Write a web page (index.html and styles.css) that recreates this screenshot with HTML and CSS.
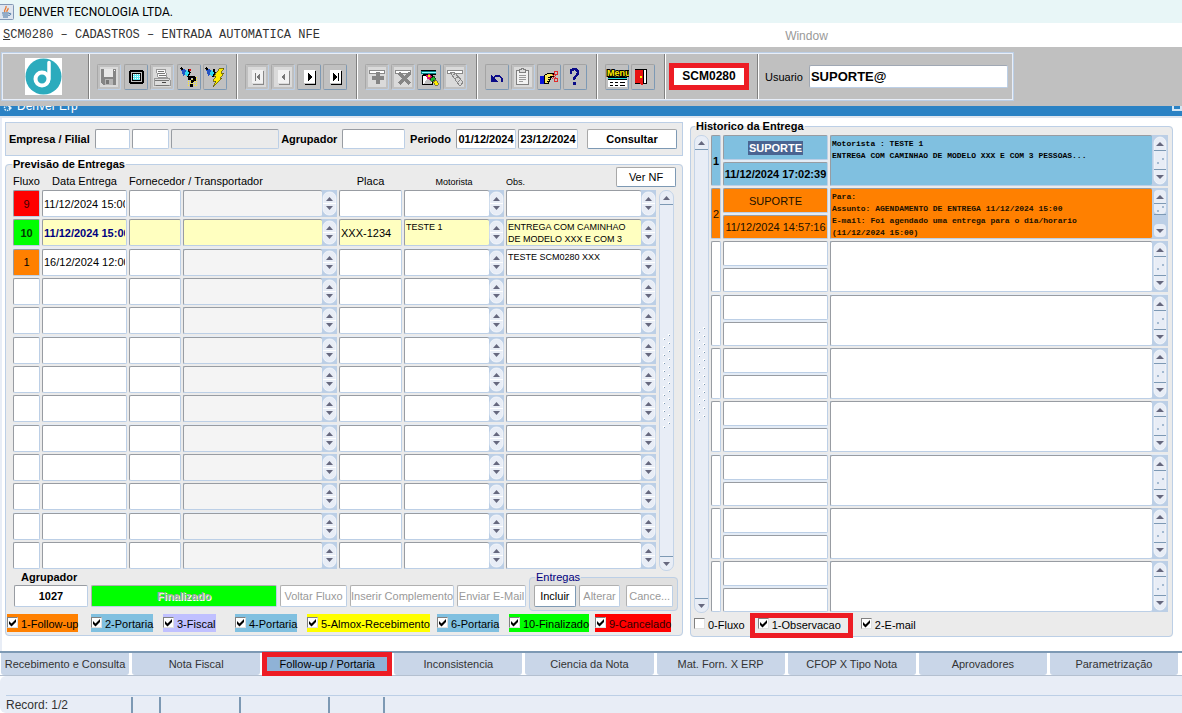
FILE: index.html
```html
<!DOCTYPE html>
<html lang="pt-BR">
<head>
<meta charset="utf-8">
<title>DENVER TECNOLOGIA LTDA.</title>
<link rel="stylesheet" href="styles.css">
</head>
<body>
<header class="titlebar">
  <svg class="java" viewBox="0 0 14 16" aria-hidden="true"><rect x="-3" y="0.5" width="16.500" height="15" rx="1" fill="#dfe6f0" stroke="#8297b5"/><path d="M5 8C3 6 7 5 6 2M7 8C6 6 9 6 8 4" fill="none" stroke="#e8762c" stroke-width="1.300"/><path d="M2 9h7M2.500 11h6M3 13h5M9 9.500c3-1 2 2-.5 2" fill="none" stroke="#44719f"/></svg>
  <span>DENVER TECNOLOGIA LTDA.</span>
</header>
<nav class="menubar">
  <span class="path"><u>S</u>CM0280 – CADASTROS – ENTRADA AUTOMATICA NFE</span>
  <span class="window">Window</span>
</nav>
<div class="toolbar-area">
  <div class="toolbar">
    <div class="sec logo">
      <svg viewBox="0 0 37 37" role="img" aria-label="Denver"><rect width="37" height="37" fill="#fff"/><circle cx="18.500" cy="18.500" r="18" fill="#2cabbd"/><circle cx="17" cy="21" r="6.500" fill="none" stroke="#fff" stroke-width="4"/><path d="M24 4.500V18q0 6-3 8" fill="none" stroke="#fff" stroke-width="3.500" stroke-linecap="round"/></svg>
    </div>
    <div class="sec five">
      <button class="tb off" aria-label="Salvar"><svg viewBox="0 0 24 24"><path d="M4 4h15v16H6l-2-2z" fill="#858585"/><path d="M7 4h9v8H7z" fill="#e8e8e8"/><path d="M17 5h1v1h-1z" fill="#fff"/><path d="M8 14h8v6H8z" fill="#b5b5b5"/><path d="M9 15h3v4H9z" fill="#777"/></svg></button>
      <button class="tb" aria-label="Tela"><svg viewBox="0 0 24 24"><path d="M6 5h13v1h1v12h-1v1H6v-1H5V6h1z" fill="#000"/><path d="M7 7h11v10H7z" fill="#c0c0c0"/><path d="M8 8h9v8H8z" fill="#000"/><path d="M9 9h7v6H9z" fill="#5fe6ee"/><path d="M9 9.500h7M9 11.500h7M9 13.500h7" stroke="#fff" stroke-dasharray="1 1"/></svg></button>
      <button class="tb off" aria-label="Imprimir"><svg viewBox="0 0 24 24"><path d="M6 4h9l2 8H8z" fill="#fafafa" stroke="#999"/><path d="M8 6.500h6M8 8.500h7M9 10.500h7" stroke="#777"/><path d="M4 13h15l1 2v5H4z" fill="#ddd" stroke="#999"/><path d="M5 15.500h14M6 20.500h13" stroke="#777"/><path d="M12 17.500h4" stroke="#444"/></svg></button>
      <button class="tb" aria-label="Entrar consulta"><svg viewBox="0 0 24 24"><path d="M11 12.500h10M11 14.500h10M11 16.500h10M11 18.500h10M11 20.500h10" stroke="#ffec20" stroke-dasharray="1 1"/><path d="M4 4h3l3 3-4 4-1-4z" fill="#2453c4"/><path d="M9 5l4 2-2 5-3-2z" fill="#30d8ee"/><path d="M4 3l2 2M12 4v3M13 7l-2 5" stroke="#000" stroke-width="1.500"/><path d="M12 4h2v2h-2z" fill="#d00"/><path d="M12 11h6v1h1v4h-2v1h-1v1h-2v-3h2v-2h-2v2h-3v-3h1z" fill="#000"/><path d="M13 19h3v3h-3z" fill="#000"/></svg></button>
      <button class="tb" aria-label="Executar consulta"><svg viewBox="0 0 24 24"><path d="M3 4h3l3 3-4 4-1-4z" fill="#2453c4"/><path d="M8 5l4 2-2 5-3-2z" fill="#30d8ee"/><path d="M3 3l2 2M11 4v3M12 7l-2 5" stroke="#000" stroke-width="1.500"/><path d="M17 3h4l-3 5h3l-4 5h2l-9 9 3-6h-3l3-5h-2z" fill="#ffee00" stroke="#554d00" stroke-width=".7"/></svg></button>
    </div>
    <div class="sec four">
      <button class="tb off" aria-label="Primeiro"><svg viewBox="0 0 24 24"><path d="M7 5h11v13H7z" fill="#f2f2f2"/><path d="M18.500 6v13.500H8" fill="none" stroke="#888"/><path d="M10 8h1v8h-1zM15 8v8l-4-4z" fill="#777"/></svg></button>
      <button class="tb off" aria-label="Anterior"><svg viewBox="0 0 24 24"><path d="M7 5h11v13H7z" fill="#f2f2f2"/><path d="M18.500 6v13.500H8" fill="none" stroke="#888"/><path d="M14 8v8l-4-4z" fill="#777"/></svg></button>
      <button class="tb" aria-label="Próximo"><svg viewBox="0 0 24 24"><path d="M7 5h11v13H7z" fill="#fff"/><path d="M18.500 6v13.500H8" fill="none" stroke="#000"/><path d="M11 8v8l4-4z" fill="#000"/></svg></button>
      <button class="tb" aria-label="Último"><svg viewBox="0 0 24 24"><path d="M7 5h11v13H7z" fill="#fff"/><path d="M18.500 6v13.500H8" fill="none" stroke="#000"/><path d="M10 8v8l4-4zM15 8h1v8h-1z" fill="#000"/></svg></button>
    </div>
    <div class="sec four">
      <button class="tb off" aria-label="Inserir registro"><svg viewBox="0 0 24 24"><path d="M4.500 5.500h15v3h-15z" fill="#fff" stroke="#888"/><path d="M11 7h4v4h4v4h-4v4h-4v-4H7v-4h4z" fill="#858585"/></svg></button>
      <button class="tb off" aria-label="Remover registro"><svg viewBox="0 0 24 24"><path d="M4.500 5.500h15v3h-15z" fill="#fff" stroke="#888"/><path d="M8 8l11 11M19 8L8 19" stroke="#858585" stroke-width="3"/></svg></button>
      <button class="tb" aria-label="Limpar registro"><svg viewBox="0 0 24 24"><path d="M4 5h15v4H4z" fill="#087f82"/><path d="M4 5.500h15M6 9.500h13" stroke="#000"/><path d="M5 7.500h14" stroke="#8ff"/><path d="M5.500 10.500h10v9h-10z" fill="#fff" stroke="#000"/><path d="M7 19l4-7 4 7z" fill="#c0c0c0"/><path d="M9 10l4-1 3 4-3 2-3-1z" fill="#e41568"/><path d="M11 10h2v2h-2z" fill="#ffec00"/><path d="M13 14l4-3 2 3-4 3z" fill="#1cb62c" stroke="#000" stroke-width=".6"/><path d="M16 17l3-2 3 4-3 2z" fill="#ffec00" stroke="#222" stroke-width=".5"/></svg></button>
      <button class="tb off" aria-label="Limpar campo"><svg viewBox="0 0 24 24"><path d="M4.500 5.500h15v3h-15z" fill="#fff" stroke="#888"/><path d="M7 7h4l9 10-2 3h-2z" fill="#d8d8d8" stroke="#888"/><path d="M9 11l4-3M12 14l4-3M15 17l3-3" stroke="#888"/></svg></button>
    </div>
    <div class="sec four">
      <button class="tb" aria-label="Desfazer"><svg viewBox="0 0 24 24"><path d="M8 14c2-5 11-4 9 3" fill="none" stroke="#0b0b88" stroke-width="1.500"/><path d="M6 10v7h7z" fill="#0b0b88"/></svg></button>
      <button class="tb off" aria-label="Colar"><svg viewBox="0 0 24 24"><rect x="5.500" y="5.500" width="12" height="14" fill="#f2f2f2" stroke="#808080" stroke-width="1.500"/><path d="M8.500 7.500v-3h2v-1h2v1h2v3z" fill="#ddd" stroke="#808080"/><path d="M8 10.500h7M8 12.500h7M8 14.500h7M8 16.500h4" stroke="#999"/></svg></button>
      <button class="tb" aria-label="Lista de valores"><svg viewBox="0 0 24 24"><path d="M3 11h4v8H3z" fill="#0a16d8"/><path d="M7.500 10.500l3-2h6v3h-3v3h-1v2h-1v2h-4z" fill="#f7e85c" stroke="#000"/><path d="M11 12.500h4M11 14.500h3M10 16.500h3" stroke="#000"/><circle cx="19" cy="8" r="2" fill="none" stroke="#e02a2a"/><circle cx="19" cy="15" r="2" fill="none" stroke="#e02a2a"/><path d="M15 9l4 4M15 14l4-4" stroke="#e02a2a"/></svg></button>
      <button class="tb" aria-label="Ajuda"><svg viewBox="0 0 24 24"><path d="M8 9V7q0-3 3.500-3T15 7.500q0 2-2 3.500t-2 4" fill="none" stroke="#0b0b88" stroke-width="2.500"/><circle cx="11.500" cy="18.500" r="1.800" fill="#0b0b88"/></svg></button>
    </div>
    <div class="sec two">
      <button class="tb menu" aria-label="Menu"><svg viewBox="0 0 24 24"><text x="2" y="11" class="menutext">Menu</text><path d="M3 13.500h19" stroke="#20dede"/><path d="M3 12.500h19M3 14.500h19" stroke="#000"/><path d="M3 15h19v7H3z" fill="#fff"/><path d="M5 17.500h3M10 17.500h3M15 17.500h5M5 20.500h3M10 20.500h3M15 20.500h5" stroke="#000"/></svg></button>
      <button class="tb" aria-label="Sair"><svg viewBox="0 0 24 24"><path d="M4.500 4.500h11v14h-11z" fill="#fff" stroke="#000"/><path d="M4 4h7l1 2v14h-2l-2-2H4z" fill="#e81313"/><path d="M12.500 4v15M4 4.500h11" stroke="#000"/><path d="M9 11h2v2H9z" fill="#fff200"/></svg></button>
    </div>
    <div class="sec code"><strong class="marked">SCM0280</strong></div>
    <div class="sec user"><label for="usuario">Usuario</label><input id="usuario" class="field" value="SUPORTE@"></div>
  </div>
</div>
<div class="mdi"><svg class="cog" viewBox="0 0 10 10" aria-hidden="true"><circle cx="4" cy="5" r="2.500" fill="none" stroke="#dff0fa" stroke-width="1.500" stroke-dasharray="1.500 1"/><path d="M6 2l3 3-3 3z" fill="#dff0fa"/></svg><span>Denver Erp</span><i class="restore"></i></div>

<main class="work">
  <section class="left">
    <form class="filter">
      <label for="emp">Empresa / Filial</label>
      <input id="emp" class="field f-emp"><input class="field f-fil" aria-label="Filial"><input class="field f-nome" aria-label="Nome da filial" readonly>
      <label for="agr">Agrupador</label><input id="agr" class="field f-agr">
      <label for="de" class="periodo">Periodo</label><input id="de" class="field f-date" value="01/12/2024"><input class="field f-date" aria-label="Periodo final" value="23/12/2024">
      <button type="button" class="btn consultar">Consultar</button>
    </form>
    <fieldset class="panel previsao">
      <legend>Previsão de Entregas</legend>
      <button class="btn vernf">Ver NF</button>
      <div class="gridwrap">
        <table class="grid">
          <colgroup><col class="c-flx"><col class="c-dat"><col class="c-for"><col class="c-tra"><col class="c-pla"><col class="c-mot"><col class="c-obs"></colgroup>
          <thead><tr><th>Fluxo</th><th>Data Entrega</th><th colspan="2" class="start">Fornecedor / Transportador</th><th>Placa</th><th class="mini">Motorista</th><th class="mini start">Obs.</th></tr></thead>
          <tbody id="entregas"></tbody>
        </table>
        <div class="scroll"><i class="up"></i><i class="grip"></i><i class="down"></i></div>
      </div>
      <div class="actions">
        <div class="agrup"><label for="agrup">Agrupador</label><input id="agrup" class="field" value="1027"></div>
        <button class="btn done" disabled>Finalizado</button>
        <button class="btn b-volta" disabled>Voltar Fluxo</button>
        <button class="btn b-insere" disabled>Inserir Complemento</button>
        <button class="btn b-envia" disabled>Enviar E-Mail</button>
        <fieldset class="entregas">
          <legend>Entregas</legend>
          <div><button class="btn">Incluir</button><button class="btn" disabled>Alterar</button><button class="btn" disabled>Cance...</button></div>
        </fieldset>
      </div>
      <div class="chips">
        <label class="orange"><input type="checkbox" checked>1-Follow-up</label>
        <label class="blue"><input type="checkbox" checked>2-Portaria</label>
        <label class="lilac"><input type="checkbox" checked>3-Fiscal</label>
        <label class="blue"><input type="checkbox" checked>4-Portaria</label>
        <label class="yellow"><input type="checkbox" checked>5-Almox-Recebimento</label>
        <label class="blue"><input type="checkbox" checked>6-Portaria</label>
        <label class="green"><input type="checkbox" checked>10-Finalizado</label>
        <label class="red"><input type="checkbox" checked>9-Cancelado</label>
      </div>
    </fieldset>
  </section>
  <fieldset class="panel historico">
    <legend>Historico da Entrega</legend>
    <div class="histwrap">
      <div class="scroll"><i class="up"></i><i class="grip"></i><i class="down"></i></div>
      <table class="hist">
        <colgroup><col class="h-num"><col class="h-usr"><col></colgroup>
        <tbody id="historico"></tbody>
      </table>
    </div>
    <div class="kinds">
      <label><input type="checkbox">0-Fluxo</label>
      <label class="marked-label"><input type="checkbox" checked>1-Observacao</label>
      <label><input type="checkbox" checked>2-E-mail</label>
    </div>
  </fieldset>
</main>

<nav class="tabs">
  <button>Recebimento e Consulta</button><button>Nota Fiscal</button><button class="active">Follow-up / Portaria</button><button>Inconsistencia</button><button>Ciencia da Nota</button><button>Mat. Forn. X ERP</button><button>CFOP X Tipo Nota</button><button>Aprovadores</button><button>Parametrização</button>
</nav>
<footer class="status">
  <div class="cells"><span class="s1">Record: 1/2</span><span class="s2"></span><span class="s3"></span><span class="s4"></span><span class="s5"></span></div>
</footer>
<script src="app.js"></script>
</body>
</html>
```

FILE: styles.css
```css
* { box-sizing: border-box; }
body {
  margin: 0;
  min-height: 100vh;
  display: flex;
  flex-direction: column;
  background: #fff;
  color: #000;
  font: 11px/12px "Liberation Sans", Arial, sans-serif;
}
button, input, textarea { font: inherit; color: inherit; margin: 0; }
fieldset { margin: 0; padding: 0; min-width: 0; }

.titlebar {
  height: 23px;
  display: flex;
  align-items: center;
  gap: 5px;
  background: #e8f6f7;
  font: 12px/16px Roboto, "Noto Sans", sans-serif;
}
.java { width: 14px; height: 16px; }
.menubar { height: 24px; display: flex; align-items: center; padding-left: 3px; }
.path { flex: 0 0 66%; font: 12px/16px "Liberation Mono", monospace; color: #333; white-space: nowrap; }
.window { font-size: 12px; color: #999; padding: 2px 0 0 4px; }

.toolbar-area { background: #c0c0c0; padding: 5px 0 5px 1px; }
.toolbar {
  display: flex;
  width: 1013px;
  max-width: 100%;
  height: 49px;
  border: 1px solid #bccfe6;
  outline: 1px solid #e8eef8;
  outline-offset: -2px;
}
.sec { display: flex; align-items: center; justify-content: space-between; padding: 0 9px 0 7px; border-left: 1px solid #fff; border-right: 1px solid #808080; }
.sec:first-child { border-left: 0; }
.sec:last-child { border-right: 0; }
.logo { width: 87px; padding: 0 0 0 23px; }
.logo svg { width: 37px; height: 37px; }
.five { width: 148px; }
.four { width: 120px; }
.two { width: 68px; }
.code { width: 93px; padding: 0 8px 0 3px; }
.user { flex: 1; gap: 6px; padding: 0 5px 0 6px; }
.marked { flex: 1; border: 5px solid #ed1c24; background: #fff; text-align: center; font-size: 12px; line-height: 17px; }
.user .field { flex: 1; min-width: 0; height: 23px; font-size: 13px; font-weight: bold; border-color: #a0a8b4 #bccfe6 #bccfe6 #a0a8b4; }
.tb {
  width: 24px;
  height: 26px;
  padding: 0;
  border: 1px solid;
  border-color: #a4a4a4 #7d99b4 #7d99b4 #a4a4a4;
  border-radius: 2px;
  background: #c0c0c0;
}
.tb.off { border-color: #a8a8a8 #bccfe6 #bccfe6 #a8a8a8; background: #dadada; outline: 2px solid #c0c0c0; outline-offset: -3px; }
.tb svg { display: block; width: 24px; height: 24px; margin-left: -1px; shape-rendering: crispEdges; }
.menutext { font: bold 9px "Liberation Sans", sans-serif; fill: #ffee00; stroke: #000; stroke-width: 2px; paint-order: stroke; }

.mdi { height: 12px; display: flex; align-items: center; overflow: hidden; background: #2a82c4; color: #fff; font-size: 12px; line-height: 12px; border-bottom: 2px solid #dfe6ef; padding-left: 3px; gap: 4px; }
.mdi span { align-self: flex-start; margin-top: -6px; flex: 1; }
.cog { width: 10px; height: 10px; align-self: flex-start; margin-top: -3px; }
.restore { width: 10px; height: 8px; border: 2px solid #d3e6f4; align-self: flex-start; margin-top: -3px; }

.work { display: grid; grid-template-columns: 678fr 483fr; gap: 7px; padding: 2px 9px 14px 3px; border-left: 2px solid #e8edf6; }
.left { display: flex; flex-direction: column; gap: 2px; padding-top: 2px; }
.filter { display: flex; align-items: center; gap: 2px; height: 34px; padding: 0 5px 0 3px; border: 1px solid #bccfe6; background: #ebebeb; }
.filter label { font-weight: bold; padding: 0 3px 0 0; white-space: nowrap; }
.filter .periodo { padding-left: 3px; }
.field {
  display: block;
  min-width: 0;
  height: 20px;
  padding: 0 1px;
  background: #fff;
  border: 1px solid;
  border-color: #989ca2 #bccfe6 #bccfe6 #989ca2;
  border-radius: 2px;
  outline: 0;
}
.field[readonly] { background: #ebebeb; }
.f-emp { flex: 33; width: 0; }
.f-fil { flex: 35; width: 0; }
.f-nome { flex: 110; width: 0; }
.f-agr { flex: 62; width: 0; }
.f-date { width: 60px; font-weight: bold; text-align: center; padding: 0; }
.btn {
  height: 22px;
  padding: 0;
  background: #fff;
  border: 1px solid;
  border-color: #a8a8a8 #7d99b4 #7d99b4 #a8a8a8;
  border-radius: 2px;
  white-space: nowrap;
}
.btn:disabled { color: #999; border-color: #b0b0b0 #bccfe6 #bccfe6 #b0b0b0; }
.consultar { width: 90px; height: 20px; font-weight: bold; margin-left: 7px; }

.panel { position: relative; border: 1px solid #bccfe6; border-radius: 4px; background: #ebebeb; }
.panel > legend { margin-left: 6px; padding: 0 1px; font-weight: bold; line-height: 12px; }
.vernf { position: absolute; top: -3px; right: 6px; width: 60px; height: 20px; }
.previsao .vernf { margin-top: 0; }
.gridwrap { display: flex; gap: 1px; padding: 0 8px 0 5px; }
.grid, .hist { table-layout: fixed; border-collapse: separate; border-spacing: 2px; }
.grid { flex: 1; width: 0; }
th, td { padding: 0; }
th { height: 16px; font-weight: normal; white-space: nowrap; vertical-align: bottom; line-height: 14px; }
th.mini { font-size: 9px; line-height: 12px; }
th.start { text-align: left; }
.c-flx { width: 27px; }
.c-dat { width: 85px; }
.c-for { width: 52px; }
.c-tra { width: 154px; }
.c-pla { width: 63px; }
.c-mot { width: 100px; }
.c-obs { width: 150px; }
.grid td { height: 27px; background: #e4ecf6; }
.grid tr:nth-child(3n) td { height: 28px; }
.grid td .field { width: 100%; height: 27px; }
.grid td:first-child .field { text-align: center; padding: 0; }
.memo { display: flex; background: #bccfe6; }
.memo textarea.field { flex: 1; width: 0; resize: none; overflow: hidden; font-size: 9px; line-height: 12px; border-right: 0; padding: 1px; }
.memo input.field { flex: 1; width: 0; background: #f4f4f4; border-right: 0; }
.spin { flex: 0 0 15px; height: 27px; background: url("data:image/svg+xml,%3Csvg xmlns='http://www.w3.org/2000/svg' width='15' height='27'%3E%3Crect x='1' y='2' width='13' height='23' rx='6' fill='%23e8edf6' stroke='%23fff' stroke-width='.6'/%3E%3Cpath d='M1 13.500h13' stroke='%23fff'/%3E%3Cpath d='M4 11h7L7.500 7zM4 16h7l-3.500 4z' fill='%2366687e'/%3E%3C/svg%3E") no-repeat; }
.current .field, .current .memo .field { background: #ffffc0; }
.current .b { color: #000080; font-weight: bold; }
.field.f-red { background: #f00; color: #400000; }
.current .field.f-green { background: #0f0; font-weight: bold; color: #003c00; }
.field.f-orange { background: #ff8000; }

.scroll { flex: 0 0 15px; display: flex; flex-direction: column; align-items: center; justify-content: space-between; background: #e8edf6; border: 1px solid #c4d4e8; border-radius: 7px; }
.gridwrap .scroll { margin-top: 20px; }
.scroll i { width: 13px; height: 14px; background: no-repeat center; }
.scroll .up { border-bottom: 1px solid #7d99b4; background-image: url("data:image/svg+xml,%3Csvg xmlns='http://www.w3.org/2000/svg' width='13' height='13'%3E%3Cpath d='M3 9h7L6.500 5z' fill='%2366687e'/%3E%3C/svg%3E"); }
.scroll .down { border-top: 1px solid #7d99b4; background-image: url("data:image/svg+xml,%3Csvg xmlns='http://www.w3.org/2000/svg' width='13' height='13'%3E%3Cpath d='M3 5h7L6.500 9z' fill='%2366687e'/%3E%3C/svg%3E"); }
.scroll .grip { height: 96px; background: url("data:image/svg+xml,%3Csvg xmlns='http://www.w3.org/2000/svg' width='13' height='8'%3E%3Cpath d='M3 5h2v2H3zM8 1h2v2H8z' fill='%23fff'/%3E%3Cpath d='M4 6h1v1H4zM9 2h1v1H9z' fill='%237d99b4'/%3E%3C/svg%3E"); }

.actions { display: flex; align-items: flex-end; gap: 3px; padding: 0 4px 0 8px; }
.actions > .btn, .agrup { margin-bottom: 4px; }
.agrup { width: 74px; }
.agrup label { display: block; padding-left: 7px; font-weight: bold; margin-bottom: 2px; }
.agrup .field { width: 100%; height: 22px; font-weight: bold; text-align: center; }
.actions .done { flex: 1; background: #0f0; font-weight: bold; color: #a5a5a5; text-shadow: 1px 1px 0 #fff; }
.b-volta { width: 67px; }
.b-insere { width: 104px; }
.b-envia { width: 69px; }
.entregas { width: 149px; border: 1px solid #bccfe6; border-radius: 4px; background: #e0e0e0; padding: 2px 4px 3px; }
.entregas legend { margin-left: 1px; padding: 0 1px; color: #000080; }
.entregas div { display: flex; justify-content: space-between; gap: 3px; }
.entregas .btn { width: 42px; }
.entregas .btn:last-child { width: 47px; margin-left: 3px; }

.chips { display: grid; grid-template-columns: 84fr 72fr 72fr 72fr 130fr 72fr 86fr 87fr; padding: 3px 0 3px 1px; }
.chips label, .kinds label { display: flex; align-items: center; gap: 3px; white-space: nowrap; }
.chips label { justify-self: start; height: 18px; padding-top: 2px; }
input[type="checkbox"] { appearance: none; flex: none; width: 11px; height: 11px; margin-bottom: 3px; background: #fff no-repeat center; border: 1px solid; border-color: #808080 #e0e0e0 #e0e0e0 #808080; }
input[type="checkbox"]:checked { background-image: url("data:image/svg+xml,%3Csvg xmlns='http://www.w3.org/2000/svg' width='9' height='9'%3E%3Cpath d='M1 3v3l2.500 2.500L8 4V1L3.500 5.500z' fill='%23000'/%3E%3C/svg%3E"); }
.orange { background: #ff8000; }
.blue { background: #80c0e0; }
.lilac { background: #c0c0ff; }
.yellow { background: #ff0; }
.green { background: #0f0; }
.red { background: #f00; color: #300000; }

.historico > legend { margin-left: 4px; }
.histwrap { display: flex; padding: 1px 2px 0 3px; }
.histwrap .scroll { margin: 2px 0 1px; }
.hist { flex: 1; width: 0; }
.h-num { width: 10px; }
.h-usr { width: 105px; }
.hist td { height: 51px; background: #e4ecf6; }
.hist tr:nth-child(3n+1) td { height: 52px; }
.hist tr:first-child td { height: 51px; }
.hist .field { width: 100%; text-align: center; padding: 0; }
.hist .num { height: 51px; }
.hist .who { display: flex; flex-direction: column; gap: 2px; }
.hist .who .field { height: 25px; }
.hist .who .field:last-child { height: 24px; }
.hist .memo textarea.field { height: 51px; text-align: left; font: bold 8px/12px "Liberation Mono", monospace; padding: 2px 1px; }
.bar { flex: 0 0 16px; height: 51px; background: url("data:image/svg+xml,%3Csvg xmlns='http://www.w3.org/2000/svg' width='16' height='51'%3E%3Crect x='2' y='2' width='12' height='47' rx='6' fill='%23e8edf6' stroke='%23fff' stroke-width='.6'/%3E%3Cpath d='M2 15.500h12M2 34.500h12' stroke='%237d99b4'/%3E%3Cpath d='M4 11h8L8 7zM4 40h8l-4 4z' fill='%2366687e'/%3E%3Cpath d='M5 27h2v2H5zM10 23h2v2h-2z' fill='%23a3b9d0'/%3E%3C/svg%3E") no-repeat; }
.bar.more { background-image: url("data:image/svg+xml,%3Csvg xmlns='http://www.w3.org/2000/svg' width='16' height='51'%3E%3Crect x='2' y='2' width='12' height='24' rx='4' fill='%23e8edf6'/%3E%3Crect x='2' y='36' width='12' height='13' rx='4' fill='%23e8edf6'/%3E%3Cpath d='M2 15.500h12M2 26.500h12' stroke='%237d99b4'/%3E%3Cpath d='M4 11h8L8 7zM4 41h8l-4 4z' fill='%2366687e'/%3E%3Cpath d='M5 22h2v2H5zM10 18h2v2h-2z' fill='%23a3b9d0'/%3E%3C/svg%3E"); }
.h-blue .field { background: #80c0e0; font-weight: bold; }
.h-orange .field { background: #ff8000; color: #201000; }
.h-blue .name { display: flex; align-items: center; justify-content: center; }
.name mark { background: #4a6491; color: #fff; padding: 1px 1px; }
.kinds { display: flex; align-items: center; height: 22px; padding-left: 3px; }
.kinds .marked-label { outline: 5px solid #ed1c24; margin: 0 13px 0 10px; padding: 0 7px 0 3px; height: 15px; }

.tabs { display: grid; grid-template-columns: repeat(9, 1fr); gap: 3px; padding: 0 4px 0 1px; border-top: 2px solid #7d99b4; border-bottom: 1px solid #b4c0d0; background: #fff; }
.tabs button { height: 22px; padding: 0; border: 0; border-radius: 0 0 3px 3px; background: #c9d6e8; color: #333; white-space: nowrap; }
.tabs .active { position: relative; background: #8fb2d6; color: #000; border-radius: 0; outline: 5px solid #ed1c24; outline-offset: -4px; }
.status { flex: 1; background: #e8edf6; border-radius: 6px 0 0 6px; padding: 19px 0 0 6px; min-height: 37px; }
.cells { display: flex; border-top: 1px solid #bccfe6; font-size: 12px; line-height: 16px; color: #333; padding-top: 1px; }
.cells span { height: 16px; border-right: 2px solid #7d99b4; }
.s1 { width: 127px; }
.s2 { width: 28px; }
.s3 { width: 80px; }
.s4 { width: 89px; }
.s5 { width: 55px; }
```

FILE: app.js
```js
const entregas = [
  { fluxo: "9", cor: "f-red", data: "11/12/2024 15:00" },
  { fluxo: "10", cor: "f-green", data: "11/12/2024 15:00", placa: "XXX-1234", motorista: "TESTE 1", obs: "ENTREGA COM CAMINHAO\nDE MODELO XXX E COM 3", atual: true },
  { fluxo: "1", cor: "f-orange", data: "16/12/2024 12:00", obs: "TESTE SCM0280 XXX" }
];
const historico = [
  { n: "1", cor: "h-blue", quem: "SUPORTE", quando: "11/12/2024 17:02:39", texto: "Motorista : TESTE 1\nENTREGA COM CAMINHAO DE MODELO XXX E COM 3 PESSOAS..." },
  { n: "2", cor: "h-orange", quem: "SUPORTE", quando: "11/12/2024 14:57:16", mais: true, texto: "Para:\nAssunto: AGENDAMENTO DE ENTREGA 11/12/2024 15:00\nE-mail: Foi agendado uma entrega para o dia/horario\n(11/12/2024 15:00)" }
];
const campo = (nome, valor = "", classe = "") =>
  `<input class="field ${classe}" aria-label="${nome}" value="${valor}">`;
const memo = (nome, valor = "", barra = "spin") =>
  `<div class="memo"><textarea class="field" aria-label="${nome}">${valor}</textarea><i class="${barra}"></i></div>`;

document.getElementById("entregas").innerHTML = Array.from({ length: 13 }, (_, i) => {
  const e = entregas[i] || {};
  return `<tr class="${e.atual ? "current" : ""}">
    <td>${campo("Fluxo", e.fluxo, e.cor)}</td>
    <td>${campo("Data Entrega", e.data, "b")}</td>
    <td>${campo("Fornecedor")}</td>
    <td><div class="memo">${campo("Transportador")}<i class="spin"></i></div></td>
    <td>${campo("Placa", e.placa)}</td>
    <td>${memo("Motorista", e.motorista)}</td>
    <td>${memo("Obs.", e.obs)}</td></tr>`;
}).join("");

document.getElementById("historico").innerHTML = Array.from({ length: 9 }, (_, i) => {
  const h = historico[i] || {};
  const nome = i === 0 ? `<div class="field name"><mark>${h.quem}</mark></div>` : campo("Usuario", h.quem);
  return `<tr class="${h.cor || ""}">
    <td>${campo("Numero", h.n, "num")}</td>
    <td><div class="who">${nome}${campo("Data", h.quando)}</div></td>
    <td>${memo("Historico", h.texto, h.mais ? "bar more" : "bar")}</td></tr>`;
}).join("");
```
